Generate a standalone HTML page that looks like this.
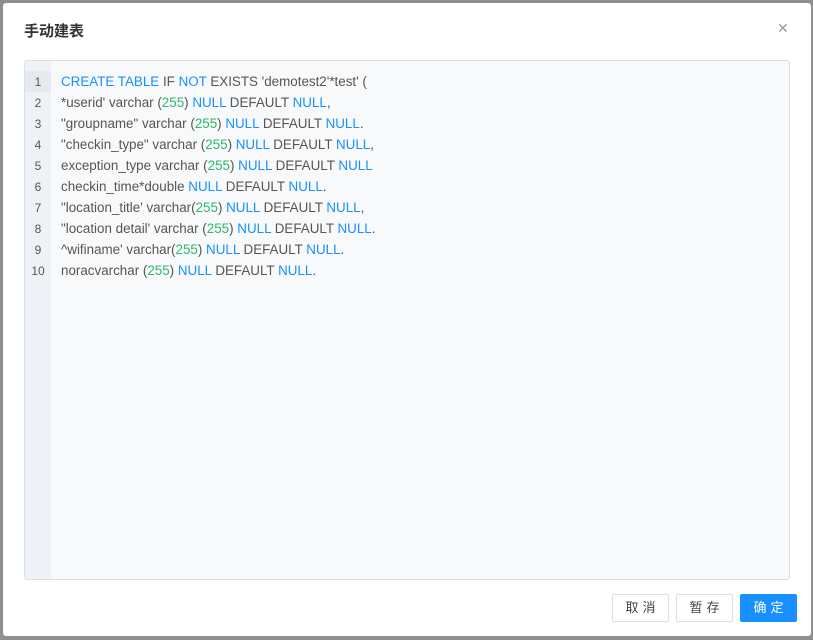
<!DOCTYPE html>
<html><head><meta charset="utf-8"><style>
body{margin:0;width:813px;height:640px;background:#8f8f8f;overflow:hidden;font-family:"Liberation Sans","Noto Sans CJK SC",sans-serif;position:relative}
.m{position:absolute;left:3px;top:3px;width:808px;height:633px;background:#fff;border-radius:3px}
.t{position:absolute;left:21px;top:17px;font-size:15px;color:#333;font-weight:600}
.x{position:absolute;left:774px;top:17px;font-size:14px;color:#999}
.ed{position:absolute;left:21px;top:57px;width:764px;height:518px;border:1px solid #dcdfe6;border-radius:3px;background:#f8f9fb;overflow:hidden}
.g{position:absolute;left:0;top:0;width:26px;height:100%;background:#eef1f5}
.ln{position:absolute;left:0;width:26px;text-align:center;font-size:12px;color:#555}
.cd{position:absolute;left:36px;font-size:13.4px;color:#555;white-space:pre}
.k{color:#1890ff}.n{color:#2fb86a}
.b{position:absolute;top:591px;width:55px;height:26px;border:1px solid #dcdfe6;border-radius:2px;font-size:13px;color:#444;text-align:center;line-height:26px;letter-spacing:4px;text-indent:4px;background:#fff}
</style></head><body><div class="m">
<div class="t">手动建表</div><div class="x">✕</div>
<div class="ed"><div class="g"></div><div style="position:absolute;left:0;top:10px;width:26px;height:21px;background:#e6e9ee"></div>
<div class="ln" style="top:14px">1</div><div class="cd" style="top:13px"><span class="k">CREATE TABLE</span> IF <span class="k">NOT</span> EXISTS 'demotest2'*test' (</div>
<div class="ln" style="top:35px">2</div><div class="cd" style="top:34px">*userid' varchar (<span class="n">255</span>) <span class="k">NULL</span> DEFAULT <span class="k">NULL</span>,</div>
<div class="ln" style="top:56px">3</div><div class="cd" style="top:55px">"groupname" varchar (<span class="n">255</span>) <span class="k">NULL</span> DEFAULT <span class="k">NULL</span>.</div>
<div class="ln" style="top:77px">4</div><div class="cd" style="top:76px">"checkin_type" varchar (<span class="n">255</span>) <span class="k">NULL</span> DEFAULT <span class="k">NULL</span>,</div>
<div class="ln" style="top:98px">5</div><div class="cd" style="top:97px">exception_type varchar (<span class="n">255</span>) <span class="k">NULL</span> DEFAULT <span class="k">NULL</span></div>
<div class="ln" style="top:119px">6</div><div class="cd" style="top:118px">checkin_time*double <span class="k">NULL</span> DEFAULT <span class="k">NULL</span>.</div>
<div class="ln" style="top:140px">7</div><div class="cd" style="top:139px">"location_title' varchar(<span class="n">255</span>) <span class="k">NULL</span> DEFAULT <span class="k">NULL</span>,</div>
<div class="ln" style="top:161px">8</div><div class="cd" style="top:160px">"location detail' varchar (<span class="n">255</span>) <span class="k">NULL</span> DEFAULT <span class="k">NULL</span>.</div>
<div class="ln" style="top:182px">9</div><div class="cd" style="top:181px">^wifiname' varchar(<span class="n">255</span>) <span class="k">NULL</span> DEFAULT <span class="k">NULL</span>.</div>
<div class="ln" style="top:203px">10</div><div class="cd" style="top:202px">noracvarchar (<span class="n">255</span>) <span class="k">NULL</span> DEFAULT <span class="k">NULL</span>.</div>
</div>
<div class="b" style="left:609px">取消</div>
<div class="b" style="left:673px">暂存</div>
<div class="b" style="left:737px;background:#1890ff;border-color:#1890ff;color:#fff">确定</div>
</div></body></html>
